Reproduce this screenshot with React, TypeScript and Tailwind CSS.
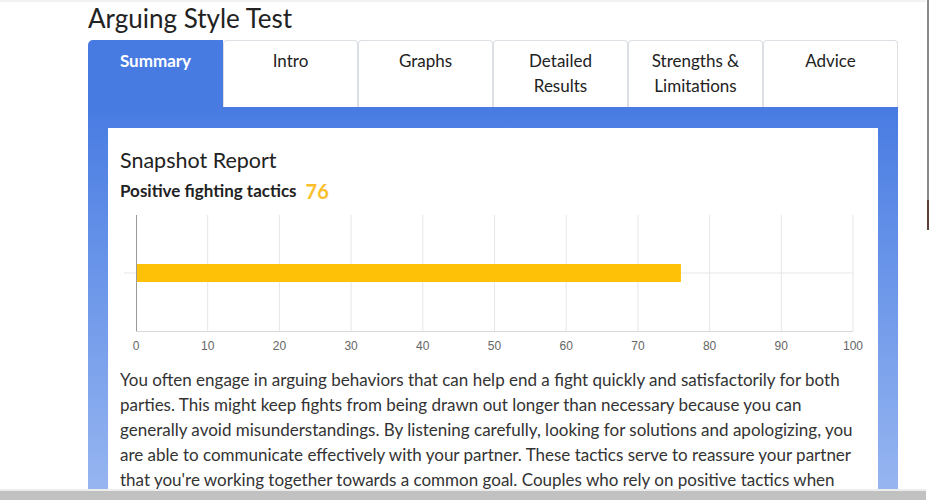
const tabs = [
  { label: "Summary", active: true },
  { label: "Intro" },
  { label: "Graphs" },
  { label: "Detailed Results" },
  { label: "Strengths & Limitations" },
  { label: "Advice" },
];

const SCORE = 76;

const Chart = () => {
  const left = 16;
  const right = 733;
  const top = 10;
  const bottom = 126;
  const w = right - left;
  const ticks = Array.from({ length: 11 }, (_, i) => i * 10);

  return (
    <svg width="746" height="162" className="block">
      {ticks.map((t) => {
        const x = left + (w * t) / 100;
        return (
          <g key={t}>
            {t > 0 && <line x1={x} y1={top} x2={x} y2={bottom} stroke="#e6e6e6" strokeWidth="1" />}
            <text
              x={x}
              y={145}
              textAnchor="middle"
              fontSize="12"
              fill="#666"
              fontFamily="'Liberation Sans', Arial, sans-serif"
            >
              {t}
            </text>
          </g>
        );
      })}
      <line x1={4} y1={68} x2={right} y2={68} stroke="#e6e6e6" strokeWidth="1" />
      <line x1={left} y1={bottom + 0.5} x2={right} y2={bottom + 0.5} stroke="#d9d9d9" strokeWidth="1" />
      <rect x={left} y={59} width={(w * SCORE) / 100} height={18} fill="#ffc107" />
      <line x1={left + 0.5} y1={top} x2={left + 0.5} y2={bottom} stroke="#999" strokeWidth="1" />
    </svg>
  );
};

export default function App() {
  return (
    <div
      className="flex h-[500px] w-[930px] overflow-hidden bg-white text-[#222]"
      style={{ fontFamily: "Lato, 'Open Sans', sans-serif" }}
    >
      <div className="flex w-[926px] flex-col">
        <div className="h-[2px] bg-[#f2f2f2]" />
        <div className="flex flex-1 flex-col overflow-hidden pl-[88px]">
          <h1 className="h-[32px] text-[26px] leading-[32px]">Arguing Style Test</h1>

          {/* Tabs */}
          <div className="mt-[6px] flex w-[810px]">
            {tabs.map((tab) =>
              tab.active ? (
                <div
                  key={tab.label}
                  className="h-[67px] w-[135px] rounded-tl-[5px] bg-[#487be2] pt-[8px] text-center text-[17px] font-bold leading-[25px] text-white"
                >
                  {tab.label}
                </div>
              ) : (
                <div
                  key={tab.label}
                  className="h-[67px] w-[135px] rounded-t-[4px] border border-b-0 border-[#dcdfe4] bg-white px-3 pt-[7px] text-center text-[17px] leading-[25px] text-[#222]"
                >
                  {tab.label}
                </div>
              )
            )}
          </div>

          {/* Panel */}
          <div className="flex-1 w-[810px] bg-gradient-to-b from-[#487be2] to-[#9cb9f1] px-[20px] pt-[21px]">
            <div className="h-full bg-white px-[12px] pt-[18px]">
              <h2 className="text-[21.5px] leading-[28px] text-[#222]">Snapshot Report</h2>
              <div className="mt-[5px] flex items-center gap-[9px] leading-[24px]">
                <span className="text-[17px] font-bold text-[#222]">Positive fighting tactics</span>
                <span className="text-[20px] font-bold text-[#fbbf2d]">{SCORE}</span>
              </div>
              <div className="mt-[2px]">
                <Chart />
              </div>
              <p className="w-[740px] text-[17px] leading-[25px] text-[#333]">
                You often engage in arguing behaviors that can help end a fight quickly and satisfactorily for both
                parties. This might keep fights from being drawn out longer than necessary because you can generally
                avoid misunderstandings. By listening carefully, looking for solutions and apologizing, you are able to
                communicate effectively with your partner. These tactics serve to reassure your partner that you're
                working together towards a common goal. Couples who rely on positive tactics when disagreements arise
                tend to feel closer afterwards.
              </p>
            </div>
          </div>
        </div>
        <div className="h-[2px] bg-[#ececec]" />
        <div className="h-[9px] bg-[#c1c1c1]" />
      </div>
      <div className="flex w-[4px] flex-col pl-[1px]">
        <div className="h-[200px] w-[2px] bg-[#8a8a8a]" />
        <div className="h-[30px] w-[2px] bg-[#5d4037]" />
      </div>
    </div>
  );
}
